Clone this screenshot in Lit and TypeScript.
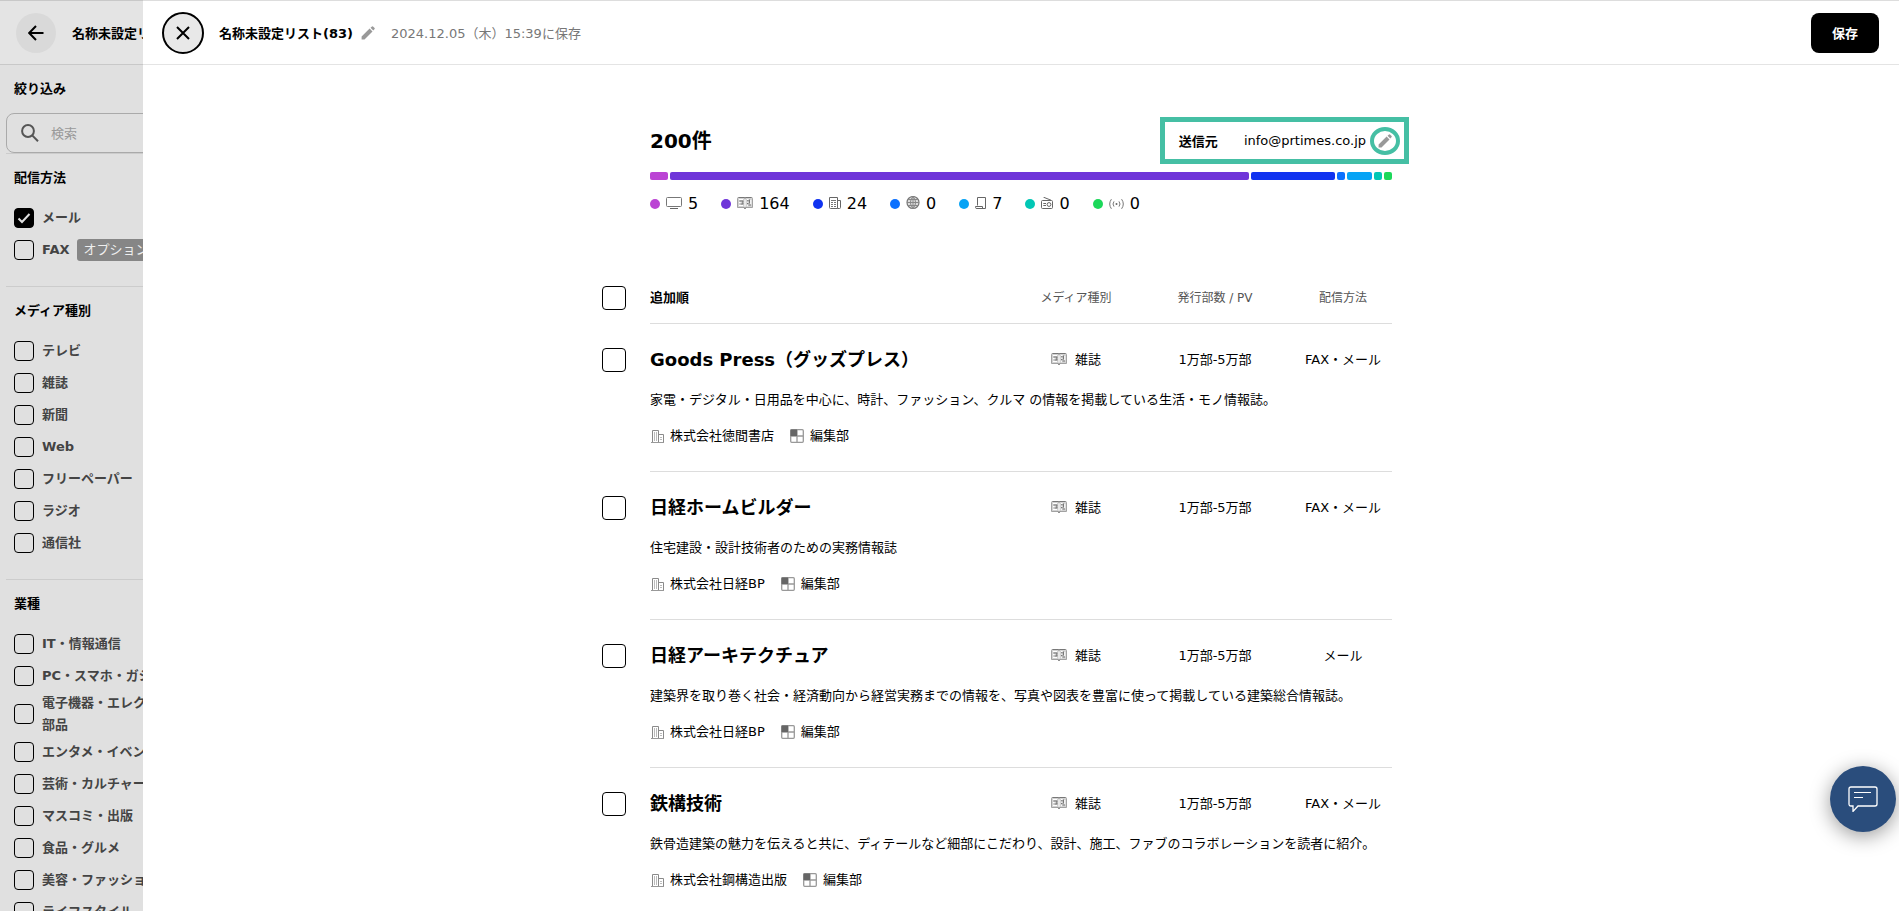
import { LitElement, html, css, svg, nothing } from "lit";
import { customElement, property } from "lit/decorators.js";

type IconName =
  | "back" | "close" | "pencil" | "search" | "tv" | "magazine" | "newspaper"
  | "web" | "freepaper" | "radio" | "agency" | "company" | "department" | "chat";

const ICONS: Record<IconName, { w: number; h: number; body: unknown }> = {
  back: { w: 16, h: 16, body: svg`<path d="M15.5 8H1.5M8 1L1.2 8L8 15" stroke="#000" stroke-width="2" fill="none"/>` },
  close: { w: 14, h: 14, body: svg`<path d="M1 1L13 13M13 1L1 13" stroke="#000" stroke-width="2" fill="none"/>` },
  pencil: { w: 14, h: 14, body: svg`<path d="M0.6 13.4V10.4L8.6 2.6L11.5 5.4L3.5 13.4Z M9.5 1.8L11 0.4Q11.5 0 12 0.4L13.6 2Q14 2.5 13.6 3L12.3 4.4Z" fill="#999"/>` },
  search: { w: 18, h: 18, body: svg`<circle cx="7" cy="7" r="5.9" fill="none" stroke="#555" stroke-width="2"/><path d="M11.2 11.4L17 17.2" stroke="#555" stroke-width="2"/>` },
  tv: { w: 16, h: 14, body: svg`<rect x="0.5" y="0.5" width="15" height="9" rx="1" fill="none" stroke="#777"/><path d="M4 11.5H12" stroke="#666"/>` },
  magazine: {
    w: 16, h: 14,
    body: svg`<path d="M0.5 1.5Q0.5 0.5 1.5 0.5H7L8 1L9 0.5H14.5Q15.5 0.5 15.5 1.5V10.5H9.4L8 11.5L6.6 10.5H0.5Z" fill="#d2d2d2" stroke="#a2a2a2"/>
      <path d="M1.5 0.5H7L8 1L9 0.5H14.5M6.6 10.5L8 11.5L9.4 10.5" stroke="#777" fill="none"/>
      <path d="M2 2.5H6M2 5.5H3.6M2 8.5H6M8 2.5V9.5M10 2.5H11.5M10 5H11M13.8 3V7.5M10 8.7H11" stroke="#fff" fill="none"/>
      <path d="M2.5 4H6.5M3.6 7H6.5M5.8 4V7M10 3.8H11.8M10 6.5H11.5M12.5 2.5V6.5M11.5 8H14" stroke="#777" fill="none"/>`,
  },
  newspaper: {
    w: 12, h: 14,
    body: svg`<path d="M0.5 0.5H8.5V11.5H1.5Q0.5 11.5 0.5 10.5ZM8.5 3.5H11.5V10.5Q11.5 11.5 10.5 11.5H8.5" fill="none" stroke="#666"/>
      <path d="M2 3.5H7M2 5.5H4M5 5.5H7M2 7.5H4M5 7.5H7M2 9.5H4M5 9.5H7" stroke="#777"/>`,
  },
  web: {
    w: 14, h: 16,
    body: svg`<circle cx="7" cy="6.5" r="6" fill="#ddd" stroke="#777" stroke-width="1.2"/>
      <path d="M1 6.5H13M2 3.5H12M2 9.5H12M7 0.5V12.5M7 0.5Q1.8 6.5 7 12.5M7 0.5Q12.2 6.5 7 12.5" fill="none" stroke="#888"/>`,
  },
  freepaper: { w: 11, h: 14, body: svg`<path d="M2.5 8.5V0.5H10.5V11.5H2Q0.5 11.5 0.5 10.5V9.5H7.5V11.5" fill="none" stroke="#666"/>` },
  radio: {
    w: 12, h: 14,
    body: svg`<rect x="0.5" y="3.5" width="11" height="8" rx="1" fill="none" stroke="#666"/><path d="M2.5 0.2L10 3.2M2.3 6.5H5M2.3 8.5H5" stroke="#666" fill="none"/><circle cx="8" cy="7.5" r="1.9" fill="none" stroke="#666"/>`,
  },
  agency: {
    w: 15, h: 12,
    body: svg`<circle cx="7.5" cy="6" r="1" fill="#666"/><path d="M5 3.4Q3 6 5 8.6M10 3.4Q12 6 10 8.6M2.4 1.2Q-1 6 2.4 10.8M12.6 1.2Q16 6 12.6 10.8" fill="none" stroke="#777"/>`,
  },
  company: {
    w: 14, h: 14,
    body: svg`<path d="M2.5 13.5V1.5H8.5V13.5ZM8.5 5.5H13.5V13.5H8.5" fill="#fff" stroke="#8a8a8a"/><path d="M1 13.5H14" stroke="#999"/>
      <path d="M4.5 3.5V12M6.5 3.5V12M11 8V12" stroke="#777" stroke-dasharray="1 1"/>`,
  },
  department: {
    w: 14, h: 14,
    body: svg`<rect x="0.7" y="0.7" width="12.6" height="12.6" rx="1" fill="#fff" stroke="#999" stroke-width="1.3"/><path d="M7 1V13M1 7H13" stroke="#999" stroke-width="1.3"/><rect x="0.5" y="0.5" width="6.5" height="6.5" fill="#666"/>`,
  },
  chat: {
    w: 30, h: 26,
    body: svg`<path d="M3 1H27Q29 1 29 3V18Q29 20 27 20H10L5 25.4V20H3Q1 20 1 18V3Q1 1 3 1Z" fill="none" stroke="#fff" stroke-width="1.3"/><path d="M6 6.5H23M6 11.5H15" stroke="#fff" stroke-width="1.2"/>`,
  },
};

const icon = (name: IconName) => {
  const i = ICONS[name];
  return html`<svg class="icon" width=${i.w} height=${i.h} viewBox="0 0 ${i.w} ${i.h}" aria-hidden="true">${i.body}</svg>`;
};

const shared = css`
  * { box-sizing: border-box; }
  .icon { display: block; flex: none; }
  button { font: inherit; color: inherit; padding: 0; border: 0; background: none; cursor: pointer; }
  input[type="checkbox"] {
    appearance: none;
    flex: none;
    margin: 0;
    border: 1px solid #000;
    border-radius: 4px;
    background: transparent center / 14px 14px no-repeat;
  }
  h1, h2, p, ul, dl, dd { margin: 0; padding: 0; }
`;

interface Filter { label: string; checked?: boolean; tag?: string }

const FILTERS: { title: string; items: Filter[] }[] = [
  { title: "配信方法", items: [{ label: "メール", checked: true }, { label: "FAX", tag: "オプション" }] },
  {
    title: "メディア種別",
    items: ["テレビ", "雑誌", "新聞", "Web", "フリーペーパー", "ラジオ", "通信社"].map((label) => ({ label })),
  },
  {
    title: "業種",
    items: [
      "IT・情報通信", "PC・スマホ・ガジェット", "電子機器・エレクトロニクス部品", "エンタメ・イベント",
      "芸術・カルチャー", "マスコミ・出版", "食品・グルメ", "美容・ファッション", "ライフスタイル",
    ].map((label) => ({ label })),
  },
];

@customElement("filter-sidebar")
export class FilterSidebar extends LitElement {
  static styles = [
    shared,
    css`
      :host { display: block; width: 216px; font-size: 13px; background: #e0e0e0; }
      .bar {
        display: flex; align-items: center; gap: 16px; height: 65px; padding: 0 16px;
        border-top: 1px solid #c8c8c8; border-bottom: 1px solid #c8c8c8; background: #e4e4e4;
        font-weight: bold; white-space: nowrap;
      }
      .back { display: grid; place-items: center; flex: none; width: 40px; height: 40px; border-radius: 50%; background: #d9d9d9; }
      .body { padding-left: 6px; }
      .heading { padding-left: 8px; font-size: 13px; line-height: 48px; }
      .search {
        display: flex; align-items: center; gap: 12px; height: 40px; padding-left: 14px;
        border: 1px solid #aaa; border-radius: 8px;
      }
      .search input { flex: 1; min-width: 0; border: 0; outline: 0; background: none; font: inherit; padding: 0; }
      .search input::placeholder { color: #999; }
      .group { padding-bottom: 20px; border-top: 1px solid #ccc; }
      .list { list-style: none; padding: 0 0 0 8px; }
      .item { display: flex; align-items: center; gap: 8px; min-height: 32px; line-height: 22px; color: #444; }
      .item label { font-weight: bold; }
      .item input { width: 20px; height: 20px; }
      .item input:checked {
        background-color: #000;
        background-image: url("data:image/svg+xml,%3Csvg xmlns='http://www.w3.org/2000/svg' viewBox='0 0 14 14'%3E%3Cpath d='M1.5 7.5L5 11L12.5 3' fill='none' stroke='%23e0e0e0' stroke-width='2'/%3E%3C/svg%3E");
      }
      .tag { padding: 0 6px; border-radius: 3px; background: #868686; color: #eee; white-space: nowrap; }
    `,
  ];

  render() {
    return html`
      <header class="bar">
        <button class="back" aria-label="戻る">${icon("back")}</button>
        <span>名称未設定リスト(83)</span>
      </header>
      <div class="body">
        <h2 class="heading">絞り込み</h2>
        <label class="search">${icon("search")}<input type="search" placeholder="検索" aria-label="検索" /></label>
        ${FILTERS.map(
          (g, gi) => html`<section class="group">
            <h2 class="heading">${g.title}</h2>
            <ul class="list">
              ${g.items.map(
                (f, i) => html`<li class="item">
                  <input type="checkbox" id="f-${gi}-${i}" ?checked=${f.checked} />
                  <label for="f-${gi}-${i}">${f.label}</label>
                  ${f.tag ? html`<span class="tag">${f.tag}</span>` : nothing}
                </li>`
              )}
            </ul>
          </section>`
        )}
      </div>
    `;
  }
}

interface Share { icon: IconName; name: string; count: number; color: string }

const SHARES: Share[] = [
  { icon: "tv", name: "テレビ", count: 5, color: "#bb44d4" },
  { icon: "magazine", name: "雑誌", count: 164, color: "#6f35d9" },
  { icon: "newspaper", name: "新聞", count: 24, color: "#1033f0" },
  { icon: "web", name: "Web", count: 0, color: "#0a70ff" },
  { icon: "freepaper", name: "フリーペーパー", count: 7, color: "#06a3f5" },
  { icon: "radio", name: "ラジオ", count: 0, color: "#02c7b5" },
  { icon: "agency", name: "通信社", count: 0, color: "#1cd85a" },
];

@customElement("media-summary")
export class MediaSummary extends LitElement {
  @property({ type: Number }) total = 200;

  static styles = [
    shared,
    css`
      :host { display: block; }
      .top { display: flex; align-items: center; justify-content: space-between; }
      .total { font-size: 20px; line-height: 24px; }
      .sender {
        display: flex; align-items: center; height: 47px; margin-right: -17px; padding: 0 4px 0 14px;
        border: 5px solid #45bfa4; font-size: 13px;
      }
      .sender dt { font-weight: bold; margin-right: 26px; }
      .sender dd { margin-right: 4px; }
      .edit { display: grid; place-items: center; width: 30px; height: 28px; border: 4px solid #45bfa4; border-radius: 50%; }
      .bar { display: flex; gap: 2px; margin-top: 8px; }
      .seg { height: 8px; min-width: 8px; border-radius: 2px; }
      .legend { display: flex; gap: 23px; margin-top: 12px; list-style: none; font-size: 16px; line-height: 24px; }
      .entry { display: flex; align-items: center; gap: 6px; }
      .dot { width: 10px; height: 10px; border-radius: 50%; }
    `,
  ];

  render() {
    return html`
      <div class="top">
        <h1 class="total">${this.total}件</h1>
        <dl class="sender">
          <dt>送信元</dt>
          <dd>info@prtimes.co.jp</dd>
          <button class="edit" aria-label="送信元を編集">${icon("pencil")}</button>
        </dl>
      </div>
      <div class="bar">
        ${SHARES.map((s) => html`<div class="seg" style="width:${(s.count / this.total) * 100}%;background:${s.color}"></div>`)}
      </div>
      <ul class="legend">
        ${SHARES.map(
          (s) => html`<li class="entry" title=${s.name}>
            <span class="dot" style="background:${s.color}"></span>${icon(s.icon)}<span>${s.count}</span>
          </li>`
        )}
      </ul>
    `;
  }
}

const MEDIA = [
  {
    name: "Goods Press（グッズプレス）", circulation: "1万部-5万部", method: "FAX・メール", company: "株式会社徳間書店",
    text: "家電・デジタル・日用品を中心に、時計、ファッション、クルマ の情報を掲載している生活・モノ情報誌。",
  },
  {
    name: "日経ホームビルダー", circulation: "1万部-5万部", method: "FAX・メール", company: "株式会社日経BP",
    text: "住宅建設・設計技術者のための実務情報誌",
  },
  {
    name: "日経アーキテクチュア", circulation: "1万部-5万部", method: "メール", company: "株式会社日経BP",
    text: "建築界を取り巻く社会・経済動向から経営実務までの情報を、写真や図表を豊富に使って掲載している建築総合情報誌。",
  },
  {
    name: "鉄構技術", circulation: "1万部-5万部", method: "FAX・メール", company: "株式会社鋼構造出版",
    text: "鉄骨造建築の魅力を伝えると共に、ディテールなど細部にこだわり、設計、施工、ファブのコラボレーションを読者に紹介。",
  },
];

@customElement("media-table")
export class MediaTable extends LitElement {
  static styles = [
    shared,
    css`
      :host { display: block; }
      table { width: 100%; table-layout: fixed; border-collapse: separate; border-spacing: 0; font-size: 13px; line-height: 24px; }
      .c-check { width: 48px; }
      .c-type { width: 120px; }
      .c-pv { width: 158px; }
      .c-method { width: 98px; }
      th, td { padding: 0; text-align: center; }
      input[type="checkbox"] { display: block; width: 24px; height: 24px; }
      thead th { padding-bottom: 13px; font-size: 12px; font-weight: normal; color: #555; border-bottom: 1px solid #ddd; vertical-align: bottom; }
      thead .check { padding-bottom: 14px; border-bottom: 0; }
      thead .order { text-align: left; font-size: 13px; font-weight: bold; color: #000; }
      .main > * { padding-top: 24px; }
      .name { text-align: left; font-size: 18px; font-weight: bold; white-space: nowrap; }
      .type { display: flex; align-items: center; justify-content: center; gap: 8px; }
      .detail { padding: 16px 0 23px; text-align: left; border-bottom: 1px solid #ddd; }
      .org { display: flex; gap: 16px; margin-top: 12px; }
      .unit { display: flex; align-items: center; gap: 6px; }
    `,
  ];

  render() {
    return html`
      <table>
        <colgroup>
          <col class="c-check" /><col /><col class="c-type" /><col class="c-pv" /><col class="c-method" />
        </colgroup>
        <thead>
          <tr>
            <th class="check"><input type="checkbox" aria-label="すべて選択" /></th>
            <th class="order">追加順</th>
            <th>メディア種別</th>
            <th>発行部数 / PV</th>
            <th>配信方法</th>
          </tr>
        </thead>
        ${MEDIA.map(
          (m) => html`<tbody>
            <tr class="main">
              <td><input type="checkbox" aria-label=${m.name} /></td>
              <th class="name" scope="row">${m.name}</th>
              <td><span class="type">${icon("magazine")}雑誌</span></td>
              <td>${m.circulation}</td>
              <td>${m.method}</td>
            </tr>
            <tr>
              <td></td>
              <td class="detail" colspan="4">
                <p>${m.text}</p>
                <div class="org">
                  <span class="unit">${icon("company")}${m.company}</span>
                  <span class="unit">${icon("department")}編集部</span>
                </div>
              </td>
            </tr>
          </tbody>`
        )}
      </table>
    `;
  }
}

@customElement("app-root")
export class AppRoot extends LitElement {
  static styles = [
    shared,
    css`
      :host {
        display: block; position: relative; height: 100vh; overflow: hidden; background: #e0e0e0; color: #000;
        font-family: "DejaVu Sans", "Noto Sans CJK JP", sans-serif; font-size: 13px;
      }
      .drawer {
        position: absolute; top: 0; right: 0; bottom: 0; left: 143px; background: #fff;
        overflow-y: auto; scrollbar-width: none;
      }
      .bar {
        display: flex; align-items: center; height: 65px; padding: 0 20px 0 19px;
        border-top: 1px solid #ddd; border-bottom: 1px solid #e4e4e4;
      }
      .close {
        display: grid; place-items: center; width: 42px; height: 42px; margin-right: 15px;
        border: 2px solid #000; border-radius: 50%; background: #e8e8e8;
      }
      .title { font-size: 13px; }
      .rename { margin: 0 16px 0 8px; }
      .saved { color: #777; }
      .save { width: 68px; height: 40px; margin-left: auto; border-radius: 8px; background: #000; color: #fff; font-weight: bold; }
      .content { max-width: 838px; margin: 52px auto 0; }
      media-summary { margin: 0 48px; }
      media-table { margin: 70px 48px 0 0; }
      .chat {
        position: absolute; right: 3px; bottom: 79px; display: grid; place-items: center; width: 66px; height: 66px;
        border-radius: 50%; background: #2a4d7c; box-shadow: 0 4px 20px rgba(0, 0, 0, 0.4);
      }
    `,
  ];

  render() {
    return html`
      <filter-sidebar></filter-sidebar>
      <main class="drawer">
        <header class="bar">
          <button class="close" aria-label="閉じる">${icon("close")}</button>
          <h2 class="title">名称未設定リスト(83)</h2>
          <button class="rename" aria-label="名称を編集">${icon("pencil")}</button>
          <span class="saved">2024.12.05（木）15:39に保存</span>
          <button class="save">保存</button>
        </header>
        <div class="content">
          <media-summary></media-summary>
          <media-table></media-table>
        </div>
      </main>
      <button class="chat" aria-label="チャット">${icon("chat")}</button>
    `;
  }
}
